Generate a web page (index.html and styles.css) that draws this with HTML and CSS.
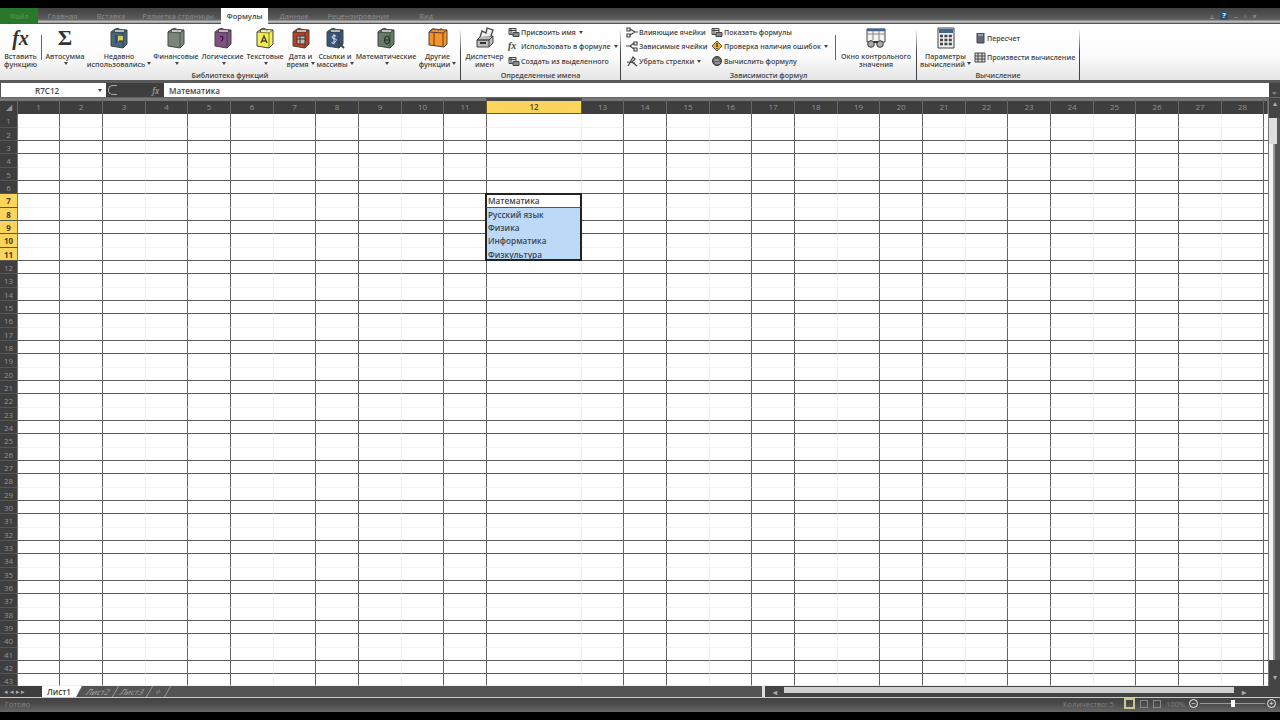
FILE: index.html
```
<!DOCTYPE html>
<html lang="ru">
<head>
  <meta charset="UTF-8">
  <meta name="viewport" content="width=device-width, initial-scale=1.0">
  <title>Лист1</title>
  <link rel="stylesheet" href="styles.css">
</head>
<body>
  <svg class="defs">
    <symbol id="book" viewBox="0 0 20 22">
      <path d="M2 5 L6 2 L18 3 L18 17 L14 21 L2 19 Z" fill="currentColor" stroke="#444" />
      <path d="M2 5 L14 6 L18 3 M14 6 V21" fill="none" stroke="#333" stroke-opacity=".6" />
      <path d="M5 5 Q7 0 10 2 Q12 3 12 5" fill="none" stroke="#555" stroke-width="1.3" />
      <path d="M6 4 L15 4" stroke="#eee" stroke-width="1.3" />
    </symbol>
    <symbol id="sheet" viewBox="0 0 12 10">
      <path d="M1 1 H8 V7 H1 Z" fill="#ddd" stroke="#444" />
      <path d="M1 3 H8 M3 1 V7 M5 5 H11 V9 H5 Z" fill="#888" stroke="#444" />
    </symbol>
  </svg>

  <nav class="tabs">
    <span class="file">Файл</span>
    <span class="tab home">Главная</span>
    <span class="tab insert">Вставка</span>
    <span class="tab layout">Разметка страницы</span>
    <span class="tab active">Формулы</span>
    <span class="tab data">Данные</span>
    <span class="tab review">Рецензирование</span>
    <span class="tab tab-view">Вид</span>
    <span class="window-buttons"><i>▵</i><b>?</b><i>–</i><i>▫</i><i>×</i></span>
  </nav>

  <div class="ribbon">
    <section class="group library">
      <div class="buttons">
        <div class="big w-insert"><span class="fx">fx</span><p>Вставить<br>функцию</p></div>
        <hr>
        <div class="big w-sum"><span class="sigma">Σ</span><p>Автосумма<br><i></i></p></div>
        <div class="big w-recent"><svg class="blue"><use href="#book" /><path d="M9 9h5v5h-5z" fill="#d8c860" /><path d="M7 8v9M10 14h4" stroke="#234" /></svg><p>Недавно<br>использовались<i></i></p></div>
        <div class="big w-fin"><svg class="sage"><use href="#book" /></svg><p>Финансовые<br><i></i></p></div>
        <div class="big w-logic"><svg class="purple"><use href="#book" /><path d="M7 10q3-2 3 1t-2 3" fill="none" stroke="#303" /></svg><p>Логические<br><i></i></p></div>
        <div class="big w-text"><svg class="yellow"><use href="#book" /><path d="M6 16l3-7 3 7M7 14h4" fill="none" stroke="#443" stroke-width="1.4" /></svg><p>Текстовые<br><i></i></p></div>
        <div class="big w-date"><svg class="red"><use href="#book" /><path d="M6 9h8v8h-8zM6 12h8M9 9v8" fill="#bbb" stroke="#433" /></svg><p>Дата и<br>время<i></i></p></div>
        <div class="big w-links"><svg class="navy"><use href="#book" /><path d="M11 9q-4-1-4 1t3 2 0 3-3 0M9 7v10" fill="none" stroke="#dde" /><path d="M12 14l7 7" stroke="#444" stroke-width="2" /></svg><p>Ссылки и<br>массивы<i></i></p></div>
        <div class="big w-math"><svg class="green"><use href="#book" /><ellipse cx="11" cy="13" rx="2.5" ry="4" fill="none" stroke="#222" /><path d="M9 13h4" stroke="#222" /></svg><p>Математические<br><i></i></p></div>
        <div class="big w-other"><svg class="orange"><path d="M1 5L4 2L19 3V17L16 20L1 18Z" fill="currentColor" stroke="#444" /><path d="M1 5L15 6L19 3M15 6V20M6 6V19" fill="none" stroke="#633" /><path d="M3 4Q5 0 8 3M10 4Q13 0 15 3" fill="none" stroke="#555" /></svg><p>Другие<br>функции<i></i></p></div>
      </div>
      <footer>Библиотека функций</footer>
    </section>

    <section class="group names">
      <div class="buttons">
        <div class="big w-manager"><svg><path d="M2 13L6 9H18L14 13ZM2 13H14V20H2ZM14 13L18 9V16L14 20" fill="#bbb" stroke="#444" /><path d="M5 10L7 4L11 6L12 1L18 3L16 9" fill="#eee" stroke="#444" stroke-width="1.3" /><path d="M5 16h6" stroke="#333" stroke-width="2" /></svg><p>Диспетчер<br>имен</p></div>
        <div class="stack">
          <div><svg><use href="#sheet" /></svg>Присвоить имя<i></i></div>
          <div><em>fx</em>Использовать в формуле<i></i></div>
          <div><svg><use href="#sheet" /></svg>Создать из выделенного</div>
        </div>
      </div>
      <footer>Определенные имена</footer>
    </section>

    <section class="group audit">
      <div class="buttons">
        <div class="stack arrows">
          <div><svg><path d="M1 1h3v3h-3zM1 7h3v3h-3zM4 2l5 3-5 3M8 5h4" fill="none" stroke="#444" stroke-width="1.2" /></svg>Влияющие ячейки</div>
          <div><svg><path d="M0 5h4l4-3M4 5l4 3M8 1h3v3h-3zM8 7h3v3h-3z" fill="none" stroke="#444" stroke-width="1.2" /></svg>Зависимые ячейки</div>
          <div><svg><path d="M2 10L7 1l2 2-3 3 5 4M1 6l8 1" fill="none" stroke="#444" stroke-width="1.2" /></svg>Убрать стрелки<i></i></div>
        </div>
        <div class="stack checks">
          <div><svg><use href="#sheet" /></svg>Показать формулы</div>
          <div><svg><path d="M6 0l5 5-5 5-5-5z" fill="#e9ae35" stroke="#555" /><path d="M6 2v4M6 7v1" stroke="#333" stroke-width="1.3" /></svg>Проверка наличия ошибок<i></i></div>
          <div><svg><circle cx="6" cy="5" r="4.5" fill="#666" stroke="#333" /><path d="M3 4h5M4 7h5" stroke="#bbb" /></svg>Вычислить формулу</div>
        </div>
        <hr>
        <div class="big w-watch"><svg><path d="M1 2H19V15H1Z" fill="#f4f4f4" stroke="#444" /><path d="M1 3H19" stroke="#3c6598" stroke-width="2.5" /><path d="M1 7H19M7 4V13M13 4V13" stroke="#888" /><circle cx="5" cy="17" r="3.3" fill="#aaa" stroke="#333" /><circle cx="14" cy="17" r="3.3" fill="#aaa" stroke="#333" /><path d="M8 15h4" stroke="#333" stroke-width="2" /></svg><p>Окно контрольного<br>значения</p></div>
      </div>
      <footer>Зависимости формул</footer>
    </section>

    <section class="group calc">
      <div class="buttons">
        <div class="big w-options"><svg><path d="M2 1H18V21H2Z" fill="#eee" stroke="#444" /><path d="M3 4H17" stroke="#3c6598" stroke-width="4" /><path d="M4 9H16M4 13H16M4 17H16" stroke="#444" stroke-width="2.6" stroke-dasharray="3 1.4" /></svg><p>Параметры<br>вычислений<i></i></p></div>
        <div class="stack pair">
          <div><svg><path d="M3 0h7v10h-7z" fill="#667" stroke="#444" /><path d="M4 2h5" stroke="#7aa5c5" stroke-width="2" /></svg>Пересчет</div>
          <div><svg><path d="M1 1h10v9h-10zM1 4h10M1 7h10M4 1v9M8 1v9" fill="#ddd" stroke="#444" /></svg>Произвести вычисление</div>
        </div>
      </div>
      <footer>Вычисление</footer>
    </section>
  </div>

  <div class="formula-bar">
    <span class="name-box">R7C12<i></i></span>
    <span class="fx-buttons"><b></b><em>fx</em></span>
    <span class="formula">Математика</span>
    <span class="expand">⌄</span>
  </div>

  <main class="sheet">
    <div class="grid" id="grid"></div>
    <div class="v-scroll">
      <div class="up">▴</div>
      <div class="thumb"></div>
      <div class="track"></div>
      <div class="down">▾</div>
    </div>
  </main>

  <div class="sheet-bar">
    <span class="arrows">◂ ◂ ▸ ▸</span>
    <span class="sheet-tab current">Лист1</span>
    <span class="sheet-tab">Лист2</span>
    <span class="sheet-tab">Лист3</span>
    <span class="sheet-tab">✧</span>
    <span class="h-scroll"><b>◂</b><span></span><b>▸</b></span>
  </div>

  <div class="status-bar">
    <span class="ready">Готово</span>
    <span class="count">Количество: 5</span>
    <span class="view on"></span>
    <span class="view"></span>
    <span class="view"></span>
    <span class="percent">100%</span>
    <span class="round">−</span>
    <span class="slider"><b></b></span>
    <span class="round">+</span>
  </div>

  <script>
    const COLS = 29;
    const ROWS = 43;
    const SELECTED_COL = 12;
    const values = {
      7: 'Математика',
      8: 'Русский язык',
      9: 'Физика',
      10: 'Информатика',
      11: 'Физкультура',
    };

    const grid = document.querySelector('#grid');

    const addCell = (text, ...classes) => {
      const cell = document.createElement('div');
      cell.classList.add(...classes);
      cell.textContent = text;
      grid.appendChild(cell);
      return cell;
    };

    addCell('◢', 'head');
    for (let c = 1; c <= COLS; c++) {
      const cell = addCell(c < COLS ? c : '', 'head');
      if (c === SELECTED_COL) cell.classList.add('selected');
    }

    for (let r = 1; r <= ROWS; r++) {
      const label = addCell(r, 'row-head');
      if (values[r]) label.classList.add('selected');

      for (let c = 1; c <= COLS; c++) {
        const cell = addCell('', 'cell');
        if (r % 3 === 1) cell.classList.add('faint-bottom');
        if (c % 3 === 0) cell.classList.add('faint-right');
        if (c === COLS) cell.classList.add('edge');
        if (c === SELECTED_COL && values[r]) {
          cell.textContent = values[r];
          cell.classList.add('picked');
          if (r === 7) cell.classList.add('first');
          if (r === 11) cell.classList.add('last');
        }
      }
    }
  </script>
</body>
</html>
```
FILE: styles.css
```
* { padding: 0; margin: 0; box-sizing: border-box; }

body {
  width: 1280px;
  height: 720px;
  padding: 8px 0;
  overflow: hidden;
  background: #000;
  color: #444;
  font-family: "Open Sans", "Noto Sans", sans-serif;
  font-size: 7.5px;
  display: flex;
  flex-direction: column;
}

.defs {
  display: none;
}

i {
  font-style: normal;
}

/* dropdown arrow */
.ribbon i, .name-box i {
  display: inline-block;
  border: 2px solid transparent;
  border-top: 3px solid #444;
  border-bottom: 0;
  margin-left: 3px;
  vertical-align: 2px;
}

/* ribbon tabs */
.tabs {
  height: 16px;
  flex: none;
  display: flex;
  line-height: 16px;
  text-align: center;
  background: linear-gradient(#414141, #5c5c5c 70%, #777 75%, #c8c8c8 86%, #c8c8c8 90%, #555 92%);
  color: #8d8d8d;
}

.file {
  width: 38px;
  background: #297829;
  color: #5b975b;
  border-bottom: 1px solid #555;
}

.home { width: 49px; }
.insert { width: 48px; }
.layout { width: 86px; }
.data { width: 52px; }
.review { width: 77px; }
.tab-view { width: 58px; }

.tab.active {
  width: 47px;
  background: #fff;
  color: #444;
  font-weight: 600;
}

.window-buttons {
  margin-left: auto;
  width: 70px;
  display: flex;
  gap: 6px;
  color: #aaa;
}

.window-buttons b {
  width: 8px;
  height: 9px;
  margin-top: 3px;
  line-height: 9px;
  background: #2d536d;
  color: #fff;
}

/* ribbon */
.ribbon {
  height: 56px;
  flex: none;
  display: flex;
  background: linear-gradient(#fff, #fbfbfb 60%, #e4e4e4);
}

.group {
  display: flex;
  flex-direction: column;
  border-style: solid;
  border-width: 0 1px 0 0;
  border-image: linear-gradient(#fff 10%, #444 50%, #444) 1;
}

.library { width: 461px; }
.names { width: 160px; }
.audit { width: 296px; }
.calc { width: 163px; }

.group footer {
  height: 9px;
  line-height: 9px;
  text-align: center;
  font-weight: 600;
  font-size: 7.1px;
}

.buttons {
  height: 47px;
  display: flex;
}

.buttons hr {
  width: 1px;
  height: 25px;
  margin-top: 11px;
  border: 0;
  background: #666;
}

.big {
  flex: none;
  padding-top: 3px;
  text-align: center;
  font-weight: 600;
  font-size: 7px;
}

.big svg {
  display: block;
  width: 20px;
  height: 22px;
  margin: 0 auto;
}

.big p {
  height: 16px;
  margin: 4px -5px 0;
  line-height: 8px;
  white-space: nowrap;
}

.w-insert { width: 41px; }
.w-sum { width: 46px; }
.w-recent { width: 62px; }
.w-fin { width: 52px; }
.w-logic { width: 41px; }
.w-text { width: 44px; }
.w-date { width: 27px; }
.w-links { width: 42px; }
.w-math { width: 60px; }
.w-other { width: 43px; }
.w-manager { width: 47px; }
.w-watch { width: 80px; }
.w-options { width: 57px; }

.big i { margin-left: 2px; }

.fx, .sigma {
  display: block;
  height: 22px;
  line-height: 22px;
  color: #333;
  font-family: "Liberation Serif", serif;
  font-weight: bold;
}

.fx {
  font-size: 20px;
  font-style: italic;
}

.sigma {
  font-size: 22px;
}

.blue { color: #45667b; }
.sage { color: #788878; }
.purple { color: #805080; }
.yellow { color: #f5ed51; }
.red { color: #b84124; }
.navy { color: #36567b; }
.green { color: #667c66; }
.orange { color: #f39526; }

.stack {
  padding-top: 1px;
  font-weight: 600;
  font-size: 7px;
  white-space: nowrap;
}

.stack div {
  height: 14.6px;
  display: flex;
  align-items: center;
}

.stack svg, .stack em {
  width: 12px;
  height: 11px;
  margin-right: 1px;
}

.stack em {
  font: italic bold 10px/10px "Liberation Serif", serif;
}

.stack.arrows {
  width: 90px;
  padding-left: 5px;
}

.stack.checks { width: 124px; }

.stack.pair {
  padding-top: 5px;
}

.stack.pair div {
  height: 19px;
}

/* formula bar */
.formula-bar {
  height: 18px;
  flex: none;
  display: flex;
  border-top: 3px solid #5a5a5a;
  border-bottom: 1px solid #666;
  background: #fff;
  line-height: 15px;
  font-size: 8.1px;
  font-weight: 600;
}

.name-box {
  width: 106px;
  padding-left: 34px;
  border-left: 1px solid #555;
  display: flex;
  align-items: center;
}

.name-box i { margin-left: auto; margin-right: 4px; }

.fx-buttons {
  width: 58px;
  padding: 0 5px 0 2px;
  display: flex;
  align-items: center;
  justify-content: space-between;
  background: #3e3e3e;
  color: #999;
}

.fx-buttons b {
  width: 9px;
  height: 10px;
  border: 1px solid #aaa;
  border-right: 0;
  border-radius: 6px 0 0 6px;
}

.formula {
  flex: 1;
  padding-left: 5px;
}

.expand {
  width: 11px;
  background: #444;
  color: #999;
  text-align: center;
}

/* worksheet */
.sheet {
  height: 588px;
  flex: none;
  display: flex;
  background: #fff;
}

.grid {
  width: 1268px;
  display: grid;
  grid-template-columns: 18px 42px repeat(3, 43px 43px 42px) 43px 95px repeat(5, 42px 43px 43px) 42px 4px;
  grid-template-rows: 16px repeat(14, 14px 13px 13px) 12px;
}

.head {
  border-top: 3px solid #777;
  border-right: 1px solid #666;
  background: #3e3e3e;
  color: #929292;
  font-size: 8px;
  line-height: 12px;
  text-align: center;
}

.row-head {
  overflow: hidden;
  border-right: 1px solid #777;
  border-bottom: 1px solid #555;
  background: #3e3e3e;
  color: #929292;
  font-size: 8px;
  line-height: 13px;
  text-align: center;
}

.head.selected, .row-head.selected {
  background: #fbd45c;
  color: #4d3c16;
  font-weight: bold;
}

.head.selected {
  margin-left: -1px;
  border: 1px solid #6b5b2a;
  border-top: 3px solid #4a4a4a;
  font-weight: 600;
}

.cell {
  border-right: 1px solid #626262;
  border-bottom: 1px solid #5c5c5c;
  white-space: nowrap;
}

.faint-right { border-right-color: #f1f1f1; }
.faint-bottom { border-bottom-color: #f1f1f1; }
.edge { border-right: 0; }

.picked {
  margin-left: -2px;
  padding-left: 1px;
  border-left: 2px solid #222;
  border-right: 2px solid #222;
  border-bottom: 0;
  background: #bdd9f8;
  color: #3b4652;
  font-size: 8.2px;
  font-weight: 600;
  line-height: 14px;
}

.picked.first {
  margin-top: -1px;
  border-top: 2px solid #222;
  border-bottom: 1px solid #555;
  background: #fff;
  line-height: 12px;
}

.picked.last {
  border-bottom: 2px solid #222;
  line-height: 13px;
}

.v-scroll {
  width: 12px;
  display: flex;
  flex-direction: column;
  background: #555;
  border-left: 1px solid #777;
  color: #aaa;
  text-align: center;
}

.up {
  height: 20px;
  background: #444;
}

.thumb {
  width: 8px;
  height: 26px;
  background: #ddd;
}

.track {
  flex: 1;
  width: 6px;
  border-right: 2px solid #999;
  background: #f4f4f4;
}

.down {
  height: 26px;
  background: #444;
  padding-top: 12px;
}

/* sheet tabs and horizontal scroll */
.sheet-bar {
  height: 12px;
  flex: none;
  display: flex;
  border-bottom: 1px solid #ccc;
  background: #545454;
  color: #aaa;
  line-height: 11px;
  font-size: 8px;
}

.sheet-bar .arrows {
  width: 42px;
  padding-left: 4px;
  background: #3e3e3e;
  font-size: 7px;
}

.sheet-tab {
  padding: 0 5px;
  border-right: 1px solid #999;
  transform: skewX(-30deg);
}

.sheet-tab.current {
  width: 40px;
  background: #fff;
  color: #444;
  font-weight: 600;
  transform: none;
  clip-path: polygon(0 0, 100% 0, 34px 100%, 0 100%);
}

.h-scroll {
  width: 518px;
  margin-left: auto;
  border-left: 3px solid #ddd;
  background: #444;
  display: flex;
}

.h-scroll b {
  width: 19px;
  text-align: center;
}

.h-scroll span {
  width: 450px;
  height: 6px;
  margin-top: 1px;
  background: #d0d0d0;
}

/* status bar */
.status-bar {
  height: 14px;
  flex: none;
  display: flex;
  align-items: center;
  gap: 5px;
  padding: 0 4px 3px 5px;
  background: linear-gradient(#424242, #4a4a4a 40%, #666);
  color: #818181;
}

.ready { margin-right: auto; }
.count { width: 56px; white-space: nowrap; }

.view {
  width: 8px;
  height: 8px;
  border: 1px solid #888;
}

.view.on {
  width: 11px;
  height: 11px;
  border: 2px solid #d0c68a;
}

.percent { width: 18px; text-align: right; }

.round {
  width: 9px;
  height: 9px;
  border: 1px solid #eee;
  border-radius: 50%;
  color: #fff;
  line-height: 7px;
  text-align: center;
}

.slider {
  width: 65px;
  height: 1px;
  margin: 0 -3px;
  background: #999;
  display: flex;
  align-items: center;
  justify-content: center;
}

.slider b {
  width: 4px;
  height: 7px;
  background: #fff;
}
```
